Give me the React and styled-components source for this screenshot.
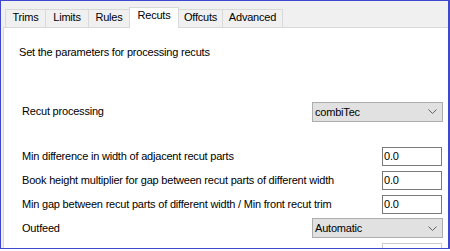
import React from 'react';
import styled, { createGlobalStyle } from 'styled-components';

const GlobalStyle = createGlobalStyle`
  html, body {
    margin: 0;
    padding: 0;
    background: #ffffff;
  }
  body {
    font-family: 'Liberation Sans', Arial, sans-serif;
    font-size: 11px;
    letter-spacing: -0.2px;
    color: #000;
  }
`;

const Frame = styled.div`
  box-sizing: border-box;
  width: 450px;
  height: 249px;
  border-top: 1px solid #3f48cc;
  border-left: 1px solid #3f48cc;
  border-right: 2px solid #3f48cc;
  border-bottom: 1px solid #3f48cc;
  background: #f0f0f0;
  overflow: hidden;
  display: flex;
  flex-direction: column;
`;

const TabStrip = styled.div`
  display: flex;
  align-items: flex-end;
  height: 26px;
  padding-left: 4px;
  flex-shrink: 0;
`;

const Tab = styled.div`
  position: relative;
  box-sizing: border-box;
  width: ${(p) => p.$w}px;
  height: ${(p) => (p.$active ? 21 : 18)}px;
  margin-left: ${(p) => (p.$first ? 0 : -1)}px;
  margin-bottom: ${(p) => (p.$active ? -1 : 0)}px;
  border: 1px solid #d9d9d9;
  border-bottom: none;
  background: ${(p) => (p.$active ? '#ffffff' : '#f0f0f0')};
  z-index: ${(p) => (p.$active ? 1 : 0)};
  text-align: center;
  line-height: 14px;
`;

const Page = styled.div`
  flex: 1;
  margin-left: 2px;
  background: #ffffff;
  border-top: 1px solid #d9d9d9;
  border-left: 1px solid #d9d9d9;
  padding: 17px 5px 0 14px;
  display: flex;
  flex-direction: column;
`;

const Intro = styled.div`
  line-height: 14px;
  margin-left: 1px;
`;

const Row = styled.div`
  display: flex;
  align-items: center;
  justify-content: space-between;
  height: ${(p) => p.$h || 24}px;
  margin-top: ${(p) => p.$mt || 0}px;
  padding-left: 4px;
  color: ${(p) => (p.$disabled ? '#a0a0a0' : '#000')};
  flex-shrink: 0;
`;

const Label = styled.span`
  line-height: 14px;
  white-space: nowrap;
  margin-top: -1px;
`;

const Select = styled.div`
  box-sizing: border-box;
  width: 131px;
  height: 20px;
  background: #e1e1e1;
  border: 1px solid #adadad;
  display: flex;
  align-items: center;
  justify-content: space-between;
  padding: 0 5px 0 2px;
  color: #000;
`;

const Input = styled.div`
  box-sizing: border-box;
  width: 60px;
  height: 19px;
  border: 1px solid ${(p) => (p.$disabled ? '#cccccc' : '#7a7a7a')};
  background: #fff;
  padding-left: 1px;
  line-height: 17px;
  color: ${(p) => (p.$disabled ? '#a0a0a0' : '#000')};
  margin-right: 1px;
`;

const Chevron = () => (
  <svg width="9" height="5" viewBox="0 0 9 5">
    <polyline points="0.5,0.5 4.5,4.5 8.5,0.5" fill="none" stroke="#606060" strokeWidth="1" />
  </svg>
);

const tabs = [
  { name: 'Trims', w: 41 },
  { name: 'Limits', w: 44 },
  { name: 'Rules', w: 42 },
  { name: 'Recuts', w: 50, active: true },
  { name: 'Offcuts', w: 45 },
  { name: 'Advanced', w: 61 },
];

export default function App() {
  return (
    <>
      <GlobalStyle />
      <Frame>
        <TabStrip>
          {tabs.map((t, i) => (
            <Tab key={t.name} $w={t.w} $active={t.active} $first={i === 0}>
              {t.name}
            </Tab>
          ))}
        </TabStrip>
        <Page>
          <Intro>Set the parameters for processing recuts</Intro>
          <Row $h={21} $mt={42}>
            <Label>Recut processing</Label>
            <Select>
              <span>combiTec</span>
              <Chevron />
            </Select>
          </Row>
          <Row $mt={22}>
            <Label>Min difference in width of adjacent recut parts</Label>
            <Input>0.0</Input>
          </Row>
          <Row>
            <Label>Book height multiplier for gap between recut parts of different width</Label>
            <Input>0.0</Input>
          </Row>
          <Row>
            <Label>Min gap between recut parts of different width / Min front recut trim</Label>
            <Input>0.0</Input>
          </Row>
          <Row>
            <Label>Outfeed</Label>
            <Select>
              <span>Automatic</span>
              <Chevron />
            </Select>
          </Row>
          <Row $disabled>
            <Label>Min recut length for stacking at the outfeed station</Label>
            <Input $disabled>0.0</Input>
          </Row>
        </Page>
      </Frame>
    </>
  );
}
